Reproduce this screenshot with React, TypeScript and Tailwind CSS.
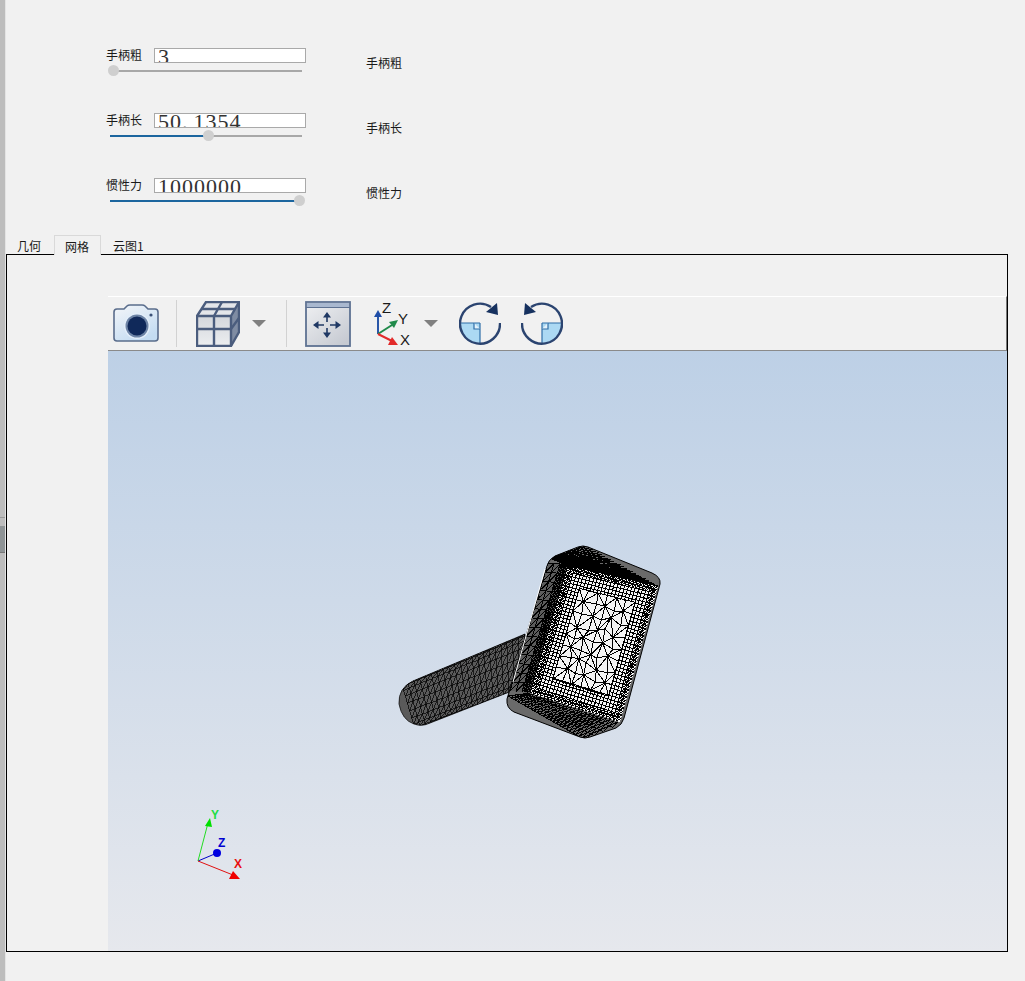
type Pt = [number, number];

const lerp = (a: Pt, b: Pt, t: number): Pt => [a[0] + (b[0] - a[0]) * t, a[1] + (b[1] - a[1]) * t];
const fmt = (p: Pt) => `${p[0].toFixed(1)} ${p[1].toFixed(1)}`;
const seg = (a: Pt, b: Pt) => `M${fmt(a)}L${fmt(b)}`;

function rnd(i: number, j: number) {
  const v = Math.sin(i * 127.1 + j * 311.7) * 43758.5453;
  return v - Math.floor(v);
}

function quad(tl: Pt, tr: Pt, br: Pt, bl: Pt, u: number, v: number): Pt {
  return lerp(lerp(tl, tr, u), lerp(bl, br, u), v);
}

// mesh of a quad patch, with a diagonal in each cell
function patchMesh(tl: Pt, tr: Pt, br: Pt, bl: Pt, nu: number, nv: number) {
  let d = "";
  for (let i = 0; i < nu; i++) {
    for (let j = 0; j < nv; j++) {
      const a = quad(tl, tr, br, bl, i / nu, j / nv);
      const b = quad(tl, tr, br, bl, (i + 1) / nu, j / nv);
      const c = quad(tl, tr, br, bl, i / nu, (j + 1) / nv);
      d += seg(a, b) + seg(a, c) + seg(b, c);
    }
  }
  return d;
}

function frontMesh() {
  const tl: Pt = [178, 29];
  const tr: Pt = [268, 50];
  const br: Pt = [230, 186];
  const bl: Pt = [140, 157];
  const P = (u: number, v: number) => quad(tl, tr, br, bl, u, v);
  const nu = 26;
  const nv = 38;
  let d = "";
  const edge = (u: number, v: number) => Math.min(u, 1 - u, v * 1.25, (1 - v) * 1.25);
  for (let i = 0; i < nu; i++) {
    for (let j = 0; j < nv; j++) {
      const u = (i + 0.5) / nu;
      const v = (j + 0.5) / nv;
      const e = edge(u, v);
      if (e > 0.19) continue;
      const a = P(i / nu, j / nv);
      const b = P((i + 1) / nu, j / nv);
      const c = P(i / nu, (j + 1) / nv);
      d += seg(a, b) + seg(a, c);
      // denser towards the rim, plain grid further in
      if (e < 0.07) d += seg(b, c);
    }
  }
  // coarse triangles in the middle
  const cu = 6;
  const cv = 8;
  const node = (i: number, j: number): Pt => {
    const u = 0.19 + (0.62 * i) / cu;
    const v = 0.15 + (0.7 * j) / cv;
    const inner = i > 0 && i < cu && j > 0 && j < cv;
    const ju = inner ? (rnd(i, j) - 0.5) * 0.06 : 0;
    const jv = inner ? (rnd(j, i + 9) - 0.5) * 0.05 : 0;
    return P(u + ju, v + jv);
  };
  for (let i = 0; i < cu; i++) {
    for (let j = 0; j < cv; j++) {
      const a = node(i, j);
      const b = node(i + 1, j);
      const c = node(i, j + 1);
      const e = node(i + 1, j + 1);
      d += seg(a, b) + seg(a, c);
      d += (i + j) % 2 ? seg(b, c) : seg(a, e);
    }
  }
  for (let i = 0; i < cu; i++) d += seg(node(i, cv), node(i + 1, cv));
  for (let j = 0; j < cv; j++) d += seg(node(cu, j), node(cu, j + 1));
  return d;
}

function handleMesh() {
  const t0: Pt = [12, 149];
  const t1: Pt = [140, 96];
  const b0: Pt = [25, 193];
  const b1: Pt = [140, 150];
  const rings = 22;
  const strips = 9;
  const P = (i: number, j: number) => {
    const s = (1 - Math.cos((Math.PI * j) / strips)) / 2;
    return lerp(lerp(t0, t1, i / rings), lerp(b0, b1, i / rings), s);
  };
  let d = "";
  for (let i = 0; i < rings; i++) {
    for (let j = 0; j < strips; j++) {
      const a = P(i, j);
      const b = P(i + 1, j);
      const c = P(i, j + 1);
      d += seg(a, b) + seg(a, c) + seg(b, c);
    }
  }
  return d;
}

const FRONT = frontMesh();
const HANDLE = handleMesh();
const SIDE_A = patchMesh([158, 27], [170, 28], [132, 156], [120, 155], 2, 14);
const SIDE_B = patchMesh([170, 28], [178, 29], [140, 157], [132, 156], 3, 40);
const TOP = patchMesh([160, 22], [193, 8], [268, 50], [178, 30], 4, 24);
const BOTTOM = patchMesh([118, 160], [140, 157], [232, 187], [195, 204], 4, 24);

const HANDLE_OUTLINE = "M23 145 L135 98 L135 140 L122 155 L40 187 Q32 191 24 188 Q12 184 9 168 Q8 152 23 145 Z";
const HEAD_OUTLINE =
  "M157 30 Q158 24 165 20 L188 11 Q193 9 198 11 L262 37 Q271 41 270 48 L234 182 Q232 189 226 192 L200 201 Q195 203 190 201 L124 176 Q116 172 117 163 Z";

function Hammer() {
  return (
    <svg width="280" height="210" viewBox="0 0 280 210" className="absolute left-[282px] top-[185px]">
      <defs>
        <clipPath id="handle-clip">
          <path d={HANDLE_OUTLINE} />
        </clipPath>
        <clipPath id="head-clip">
          <path d={HEAD_OUTLINE} />
        </clipPath>
      </defs>
      <path d={HANDLE_OUTLINE} fill="#5a5a5a" stroke="#111111" strokeWidth="0.8" />
      <path d={HANDLE} clipPath="url(#handle-clip)" fill="none" stroke="#000000" strokeWidth="0.7" shapeRendering="crispEdges" />
      <path d={HEAD_OUTLINE} fill="#6a6a6a" stroke="#000000" />
      <g clipPath="url(#head-clip)" shapeRendering="crispEdges" fill="none" stroke="#000000" strokeWidth="1">
        <path d="M158 27 L178 29 L140 157 L120 155 Z" fill="#5c5c5c" stroke="none" />
        <path d="M178 29 L268 50 L230 186 L140 157 Z" fill="#f4f4f4" stroke="none" />
        <path d={SIDE_A} />
        <path d={SIDE_B} />
        <path d={TOP} />
        <path d={BOTTOM} />
        <path d={FRONT} />
      </g>
      <path d="M155 33 L123 146" fill="none" stroke="#ffffff" strokeWidth="1" />
    </svg>
  );
}

function Triad() {
  return (
    <svg width="70" height="85" viewBox="0 0 70 85" className="absolute left-[77px] top-[450px]">
      <path d="M13 60 L32 52" stroke="#0000c8" strokeWidth="1" />
      <circle cx="32" cy="52" r="4" fill="#0000e0" />
      <path d="M13 60 L23 22" stroke="#22dd22" strokeWidth="1" />
      <path d="M25 17 L27 26 L20 25 Z" fill="#00e000" />
      <path d="M13 60 L48 74" stroke="#e01010" strokeWidth="1" />
      <path d="M55 78 L44 78 L48 70 Z" fill="#f00000" />
      <text x="26" y="18" fontSize="12" fontWeight="700" fill="#22dd44" className="font-['Liberation_Sans',sans-serif]">Y</text>
      <text x="33" y="46" fontSize="12" fontWeight="700" fill="#0000d0" className="font-['Liberation_Sans',sans-serif]">Z</text>
      <text x="49" y="67" fontSize="12" fontWeight="700" fill="#e81010" className="font-['Liberation_Sans',sans-serif]">X</text>
    </svg>
  );
}

function CameraIcon() {
  return (
    <svg width="46" height="40" viewBox="0 0 46 40" className="ml-[5px] shrink-0">
      <defs>
        <linearGradient id="cam-g" x1="0" y1="0" x2="0.6" y2="1">
          <stop offset="0" stopColor="#f4f6f9" />
          <stop offset="1" stopColor="#c4dcf2" />
        </linearGradient>
      </defs>
      <path
        d="M4 5 H11 L14 2 Q15 1 17 1 H29 Q31 1 32 2 L35 5 H42 Q45 5 45 8 V34 Q45 37 42 37 H4 Q1 37 1 34 V8 Q1 5 4 5 Z"
        fill="url(#cam-g)"
        stroke="#5a6d8c"
        strokeWidth="1.6"
      />
      <circle cx="24" cy="22" r="13" fill="#e3eefa" />
      <circle cx="24" cy="22" r="11.5" fill="#6d84a6" />
      <circle cx="24" cy="22" r="9.5" fill="#10295a" />
      <circle cx="38" cy="11" r="1.6" fill="#3c5278" />
    </svg>
  );
}

function CubeIcon() {
  return (
    <svg width="44" height="46" viewBox="0 0 44 46" className="ml-[19px] shrink-0">
      <defs>
        <linearGradient id="cube-g" x1="0" y1="0" x2="0" y2="1">
          <stop offset="0" stopColor="#d4d7dc" />
          <stop offset="1" stopColor="#eceef0" />
        </linearGradient>
      </defs>
      <path d="M1 15 L10 1 H43 L35 15 Z" fill="#e4e6ea" />
      <path d="M35 15 L43 1 V31 L35 45 Z" fill="#7f8ca3" />
      <rect x="1" y="15" width="34" height="30" fill="url(#cube-g)" />
      <g fill="none" stroke="#4b5d7e" strokeWidth="2.4">
        <path d="M1 15 L10 1 H43 V31 L35 45 H1 Z" />
        <path d="M1 15 H35 V45 M35 15 L43 1" />
        <path d="M18 15 V45 M1 28 H35 M35 28 L43 17" />
        <path d="M5.5 8 H39 M18 15 L26 1" />
      </g>
    </svg>
  );
}

function FitIcon() {
  return (
    <svg width="46" height="46" viewBox="0 0 46 46" className="ml-[18px] shrink-0">
      <defs>
        <linearGradient id="fit-g" x1="0" y1="0" x2="0.8" y2="1">
          <stop offset="0" stopColor="#f0f1f3" />
          <stop offset="1" stopColor="#c6cad2" />
        </linearGradient>
      </defs>
      <rect x="1" y="1" width="44" height="44" fill="url(#fit-g)" stroke="#5e7292" strokeWidth="1.8" />
      <rect x="2" y="2" width="42" height="4" fill="#a9b8cf" />
      <path d="M1 6.5 H45" stroke="#5e7292" strokeWidth="1" />
      <g fill="#1f3864">
        <path d="M22 11 L18 16.5 H26 Z M22 37 L18 31.5 H26 Z M8 24 L13.5 20 V28 Z M36 24 L30.5 20 V28 Z" />
      </g>
      <path d="M22 16 V21 M22 27 V32 M13 24 H19 M25 24 H31" stroke="#1f3864" strokeWidth="1.6" />
    </svg>
  );
}

function AxesIcon() {
  return (
    <svg width="40" height="46" viewBox="0 0 40 46" className="ml-[22px] shrink-0">
      <path d="M5 33 V14" stroke="#2a57a8" strokeWidth="2" />
      <path d="M5 9 L9 16 H1 Z" fill="#1f4ea8" />
      <path d="M5 33 L19 24" stroke="#1f8a4a" strokeWidth="2" />
      <path d="M25 19 L21 27 L16 21 Z" fill="#1f8a4a" />
      <path d="M5 33 L19 40" stroke="#e22b2b" strokeWidth="2" />
      <path d="M25 44 L15 44 L19 36 Z" fill="#e22b2b" />
      <text x="9" y="12" fontSize="15" fill="#1a1a1a" className="font-['Liberation_Sans',sans-serif]">Z</text>
      <text x="25" y="23" fontSize="15" fill="#1a1a1a" className="font-['Liberation_Sans',sans-serif]">Y</text>
      <text x="27" y="44" fontSize="15" fill="#1a1a1a" className="font-['Liberation_Sans',sans-serif]">X</text>
    </svg>
  );
}

function RotateIcon({ flip, className }: { flip?: boolean; className: string }) {
  return (
    <svg width="42" height="44" viewBox="0 0 42 44" className={className}>
      <g transform={flip ? "translate(42 0) scale(-1 1)" : undefined}>
        <path d="M1 21 H21 V41 A20 20 0 0 1 1 21 Z" fill="#acd9f3" />
        <path d="M21 21 V41 M1 21 H21" fill="none" stroke="#2f6ea8" strokeWidth="1.2" />
        <path d="M15 21 V27 H21" fill="#e3f1fa" stroke="#2f6ea8" strokeWidth="1.2" />
        <path d="M32 5 A20 20 0 1 0 41 21" fill="none" stroke="#2b4470" strokeWidth="2.4" />
        <path d="M39 13 L38 1 L27 10 Z" fill="#16315f" />
      </g>
    </svg>
  );
}

function Caret({ className }: { className: string }) {
  return <div className={`shrink-0 w-0 h-0 border-x-[7px] border-x-transparent border-t-[7px] border-t-[#808080] ${className}`} />;
}

function SliderRow({ label, value, pos }: { label: string; value: string; pos: number }) {
  const [whole, frac] = value.split(".");
  return (
    <div className="flex h-[24px]">
      <div className="w-[260px] shrink-0">
        <div className="flex h-[15px] items-center">
          <span className="-mt-px w-[48px] shrink-0 text-[12px] leading-[16px] text-[#1a1a1a]">{label}</span>
          <div className="h-[15px] w-[152px] overflow-hidden border border-[#a9a9a9] bg-white pl-[3px] font-['Liberation_Serif',serif] text-[22px] leading-[16px] tracking-[1px] text-[#333333]">
            {whole}
            {frac && <span className="mr-[5px]">.</span>}
            {frac}
          </div>
        </div>
        <div className="relative ml-[4px] mt-[7px] h-[2px] w-[192px] bg-[#a8a8a8]">
          <div className="h-[2px] bg-[#1c669f]" style={{ width: pos }} />
          <div
            className="absolute top-[-5px] ml-[-5px] h-[11px] w-[11px] rounded-full bg-[#cfcfcf]"
            style={{ left: pos }}
          />
        </div>
      </div>
      <span className="mt-[7px] text-[12px] leading-[16px] text-[#1a1a1a]">{label}</span>
    </div>
  );
}

export default function App() {
  return (
    <div className="flex h-[981px] w-[1025px] overflow-hidden bg-[#f1f1f1] font-['Noto_Sans_CJK_SC','Liberation_Sans',sans-serif]">
      {/* splitter strip */}
      <div className="flex h-full w-[6px] shrink-0 flex-col border-r border-[#e4e4e4] bg-[#bdbdbd]">
        <div className="h-[518px] border-b border-[#999999]" />
        <div className="h-[8px]" />
        <div className="h-[27px] border-b border-[#777777] bg-[#8f9496]" />
      </div>

      <div className="flex min-w-0 flex-1 flex-col">
        <div className="flex flex-col gap-[41px] pl-[100px] pt-[48px]">
          <SliderRow label="手柄粗" value="3" pos={3} />
          <SliderRow label="手柄长" value="50.1354" pos={98} />
          <SliderRow label="惯性力" value="1000000" pos={189} />
        </div>

        {/* tabs */}
        <div className="mt-[33px] flex h-[19px] text-[12px] leading-[22px] text-[#1a1a1a]">
          <div className="w-[48px] pl-[11px]">几何</div>
          <div className="relative z-10 -mb-px w-[47px] border border-b-0 border-[#d9d9d9] bg-[#f1f1f1] pl-[10px]">网格</div>
          <div className="pl-[12px]">云图1</div>
        </div>

        {/* tab page */}
        <div className="flex h-[698px] w-[1002px] border border-black pl-[101px] pt-[41px]">
          <div className="flex min-w-0 flex-1 flex-col">
            <div className="flex h-[55px] shrink-0 items-center border-t border-r border-b border-t-white border-r-[#777777] border-b-[#8a8a8a] bg-[#f1f1f1]">
              <CameraIcon />
              <div className="ml-[17px] h-[47px] w-px shrink-0 bg-[#d2d2d2]" />
              <CubeIcon />
              <Caret className="ml-[12px]" />
              <div className="ml-[20px] h-[47px] w-px shrink-0 bg-[#d2d2d2]" />
              <FitIcon />
              <AxesIcon />
              <Caret className="ml-[11px]" />
              <RotateIcon className="ml-[21px] shrink-0" />
              <RotateIcon flip className="ml-[20px] shrink-0" />
            </div>
            <div className="relative flex-1 bg-gradient-to-b from-[#bdd0e6] to-[#e6e8ed]">
              <Hammer />
              <Triad />
            </div>
          </div>
        </div>
      </div>
    </div>
  );
}
